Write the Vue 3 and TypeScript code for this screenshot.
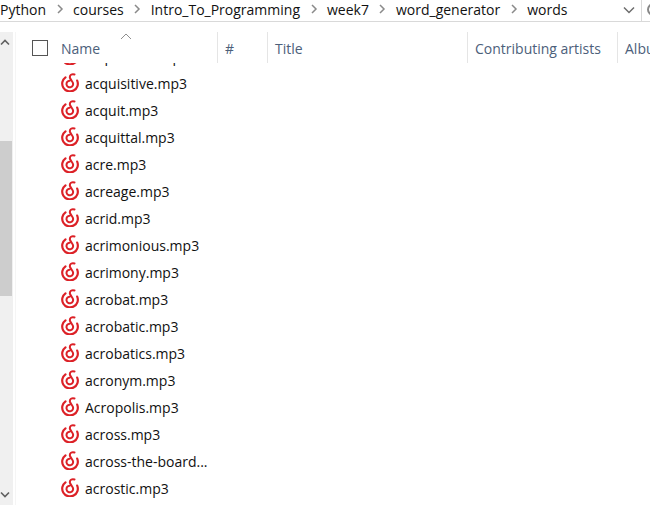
<template>
  <div class="window">
    <div class="address">
      <div class="crumbs">
        <template v-for="(part, i) in path" :key="part">
          <span class="crumb">{{ part }}</span>
          <svg v-if="i < path.length - 1" class="sep" width="8" height="10" viewBox="0 0 8 10">
            <path d="M2 1l4 4-4 4" fill="none" stroke="#8a8a8a" stroke-width="1.5" />
          </svg>
        </template>
      </div>
      <svg class="drop" width="12" height="8" viewBox="0 0 12 8">
        <path d="M1 1.5l5 5 5-5" fill="none" stroke="#6d6d6d" stroke-width="1.5" />
      </svg>
      <div class="search"><span class="lens"></span></div>
    </div>

    <div class="body">
      <div class="scrollbar">
        <svg class="arrow" width="10" height="7" viewBox="0 0 10 7">
          <path d="M1 5.5l4-4 4 4" fill="none" stroke="#606060" stroke-width="1.6" />
        </svg>
        <div class="thumb"></div>
        <svg class="arrow down" width="10" height="7" viewBox="0 0 10 7">
          <path d="M1 1.5l4 4 4-4" fill="none" stroke="#606060" stroke-width="1.6" />
        </svg>
      </div>

      <div class="pane">
        <div class="header">
          <div class="check-cell"><span class="check"></span></div>
          <div v-for="col in columns" :key="col.label" class="col" :style="{ width: col.width + 'px' }">
            {{ col.label }}
          </div>
          <svg class="sort" width="12" height="7" viewBox="0 0 12 7">
            <path d="M1 6l5-5 5 5" fill="none" stroke="#8f8f8f" />
          </svg>
        </div>

        <div class="list">
          <div v-for="file in files" :key="file" class="row">
            <svg class="icon" width="18" height="19" viewBox="0 0 18 19">
              <path d="M4.5 4.3A7.8 7.8 0 1 0 16.2 7.6" fill="none" stroke="#dc2127" stroke-width="2.2" stroke-linecap="round" />
              <path
                d="M13.5 1.5C11 .6 8.2 2 9 5L11.8 9.6A3.3 3.3 0 1 1 8.6 7.7"
                fill="none" stroke="#dc2127" stroke-width="2" stroke-linecap="round" />
            </svg>
            <span class="name">{{ file }}</span>
          </div>
        </div>
      </div>
    </div>
  </div>
</template>

<script setup lang="ts">
const path = ['Python', 'courses', 'Intro_To_Programming', 'week7', 'word_generator', 'words']

const columns = [
  { label: 'Name', width: 164 },
  { label: '#', width: 50 },
  { label: 'Title', width: 200 },
  { label: 'Contributing artists', width: 150 },
  { label: 'Album', width: 60 }
]

const files = [
  'acquisition.mp3',
  'acquisitive.mp3',
  'acquit.mp3',
  'acquittal.mp3',
  'acre.mp3',
  'acreage.mp3',
  'acrid.mp3',
  'acrimonious.mp3',
  'acrimony.mp3',
  'acrobat.mp3',
  'acrobatic.mp3',
  'acrobatics.mp3',
  'acronym.mp3',
  'Acropolis.mp3',
  'across.mp3',
  'across-the-board...',
  'acrostic.mp3',
  'acrylic.mp3'
]
</script>

<style>
html, body {
  margin: 0;
  background: #fff;
  overflow: hidden;
}
</style>

<style scoped>
.window {
  width: 650px;
  height: 508px;
  overflow: hidden;
  font-family: "Open Sans", "Noto Sans", sans-serif;
  font-size: 14px;
  color: #111;
  background: #fff;
}

.address {
  display: flex;
  align-items: center;
  height: 21px;
  border-bottom: 1px solid #d9d9d9;
}

.crumbs {
  display: flex;
  align-items: center;
  flex: 1;
  gap: 9.5px;
  white-space: nowrap;
  padding-bottom: 3px;
}

.drop {
  margin-right: 6px;
  margin-bottom: 1px;
}

.search {
  width: 8px;
  height: 100%;
  border-left: 1px solid #d9d9d9;
  overflow: hidden;
}

.lens {
  display: block;
  width: 9px;
  height: 9px;
  margin: 3px 0 0 5px;
  border: 2px solid #888;
  border-radius: 50%;
}

.body {
  display: flex;
  height: 486px;
  padding-top: 10px;
}

.scrollbar {
  flex: none;
  width: 13px;
  height: 473px;
  margin-right: 2px;
  background: #f0f0f0;
  position: relative;
}

.thumb {
  position: absolute;
  top: 109px;
  left: 0;
  width: 12px;
  height: 155px;
  background: #cdcdcd;
}

.arrow {
  position: absolute;
  top: 7px;
  left: 0;
}

.arrow.down {
  top: auto;
  bottom: 7px;
}

.pane {
  flex: 1;
  min-width: 0;
  height: 473px;
  overflow: hidden;
  border-left: 1px solid #f5f5f5;
}

.header {
  display: flex;
  position: relative;
  z-index: 1;
  height: 31px;
  background: #fff;
  color: #4c607a;
}

.check-cell {
  flex: none;
  width: 38px;
  display: flex;
  align-items: center;
  padding: 1px 0 0 16px;
  box-sizing: border-box;
}

.check {
  width: 14px;
  height: 14px;
  border: 1px solid #555;
}

.col {
  flex: none;
  box-sizing: border-box;
  line-height: 33px;
  padding-left: 7px;
  border-right: 1px solid #e5e5e5;
  white-space: nowrap;
  overflow: hidden;
}

.sort {
  position: absolute;
  top: 1px;
  left: 104px;
}

.list {
  margin-top: -20px;
}

.row {
  display: flex;
  align-items: center;
  height: 27px;
  padding-left: 45px;
}

.icon {
  flex: none;
  margin-top: -2px;
}

.name {
  margin-left: 6px;
  white-space: nowrap;
}
</style>
